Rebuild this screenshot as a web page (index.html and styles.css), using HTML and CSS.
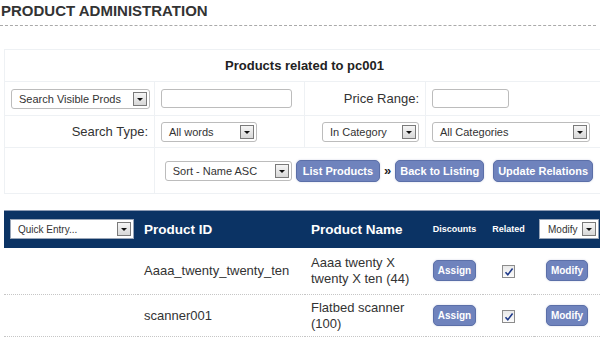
FILE: index.html
```html
<!DOCTYPE html>
<html lang="en">
<head>
    <meta charset="UTF-8">
    <title>Product Administration</title>
    <link rel="stylesheet" href="styles.css">
</head>
<body>
    <h1 class="page-title">PRODUCT ADMINISTRATION</h1>

    <table class="filter">
        <colgroup>
            <col class="f-col1"><col class="f-col2"><col class="f-col3"><col class="f-col4">
        </colgroup>
        <tr class="filter-head">
            <th colspan="4">Products related to pc001</th>
        </tr>
        <tr class="filter-row tall">
            <td><div class="select w-visible"><span>Search Visible Prods</span><i class="arrow"></i></div></td>
            <td><div class="text-input w-search"></div></td>
            <td class="label">Price Range:</td>
            <td><div class="text-input w-price"></div></td>
        </tr>
        <tr class="filter-row">
            <td class="label">Search Type:</td>
            <td><div class="select w-words"><span>All words</span><i class="arrow"></i></div></td>
            <td class="right"><div class="select w-incat"><span>In Category</span><i class="arrow"></i></div></td>
            <td><div class="select w-allcat"><span>All Categories</span><i class="arrow"></i></div></td>
        </tr>
        <tr class="filter-row actions-row">
            <td></td>
            <td colspan="3">
                <div class="actions">
                    <div class="select w-sort"><span>Sort - Name ASC</span><i class="arrow"></i></div>
                    <button class="btn wide">List Products</button>
                    <span class="raquo">&raquo;</span>
                    <button class="btn">Back to Listing</button>
                    <button class="btn">Update Relations</button>
                </div>
            </td>
        </tr>
    </table>

    <table class="products">
        <colgroup>
            <col class="p-col1"><col class="p-col2"><col class="p-col3"><col class="p-col4"><col class="p-col5"><col class="p-col6">
        </colgroup>
        <thead>
            <tr>
                <th><div class="select small w-quick"><span>Quick Entry...</span><i class="arrow"></i></div></th>
                <th class="big">Product ID</th>
                <th class="big">Product Name</th>
                <th class="tiny">Discounts</th>
                <th class="tiny">Related</th>
                <th><div class="select small w-modify"><span>Modify</span><i class="arrow"></i></div></th>
            </tr>
        </thead>
        <tbody>
            <tr class="first">
                <td></td>
                <td>Aaaa_twenty_twenty_ten</td>
                <td>Aaaa twenty X twenty X ten (44)</td>
                <td class="center"><button class="btn small">Assign</button></td>
                <td class="center"><span class="check"><svg viewBox="0 0 12 12" width="12" height="12"><path d="M2.5 6.2 L4.8 8.8 L9.6 2.6" fill="none" stroke="#1f3a8a" stroke-width="1.6"/></svg></span></td>
                <td class="center"><button class="btn small">Modify</button></td>
            </tr>
            <tr>
                <td></td>
                <td>scanner001</td>
                <td>Flatbed scanner (100)</td>
                <td class="center"><button class="btn small">Assign</button></td>
                <td class="center"><span class="check"><svg viewBox="0 0 12 12" width="12" height="12"><path d="M2.5 6.2 L4.8 8.8 L9.6 2.6" fill="none" stroke="#1f3a8a" stroke-width="1.6"/></svg></span></td>
                <td class="center"><button class="btn small">Modify</button></td>
            </tr>
        </tbody>
    </table>
</body>
</html>
```

FILE: styles.css
```css
* {
    box-sizing: border-box;
}

body {
    margin: 0;
    font-family: "Liberation Sans", Arial, sans-serif;
    color: #333;
    background: #fff;
    overflow: hidden;
}

.page-title {
    margin: 0 4px 0 0;
    padding: 2px 0 6px 1px;
    font-size: 15px;
    line-height: 17px;
    font-weight: bold;
    color: #333;
    border-bottom: 1px dashed #aaa;
}

/* filter box */
.filter {
    margin: 23px 0 0 4px;
    width: 600px;
    border-collapse: collapse;
    table-layout: fixed;
}

.f-col1 { width: 150px; }
.f-col2 { width: 150px; }
.f-col3 { width: 121px; }
.f-col4 { width: 179px; }

.filter th,
.filter td {
    border: 1px solid #eef1f4;
    padding: 0 6px;
    font-size: 13px;
    vertical-align: middle;
}

.filter-head {
    height: 32px;
}

.filter-head th {
    font-size: 13px;
    font-weight: bold;
    color: #222;
    text-align: center;
}

.filter-row {
    height: 32px;
}

.filter-row.tall {
    height: 34px;
}

.actions-row {
    height: 46px;
}

.filter td.label,
.filter td.right {
    text-align: right;
}

.select {
    display: inline-flex;
    align-items: center;
    justify-content: space-between;
    height: 20px;
    padding: 0 2px 0 7px;
    border: 1px solid #bcbcbc;
    border-radius: 3px;
    background: #fff;
    font-size: 11px;
    color: #333;
    text-align: left;
    vertical-align: middle;
    white-space: nowrap;
}

.select .arrow {
    position: relative;
    width: 14px;
    height: 14px;
    border: 1px solid #7a7a7a;
    background: linear-gradient(#f6f6f6, #d8d8d8);
}

.select .arrow::after {
    content: "";
    position: absolute;
    left: 3px;
    top: 5px;
    border-left: 3px solid transparent;
    border-right: 3px solid transparent;
    border-top: 3px solid #111;
}

.select.small {
    border-radius: 0;
    font-size: 10px;
    font-weight: normal;
    border-color: #9aa6b8;
}

.w-visible { width: 139px; }
.w-words { width: 96px; }
.w-incat { width: 97px; }
.w-allcat { width: 158px; }
.w-sort { width: 127px; margin-right: 4px; }
.w-quick { width: 124px; }
.w-modify { width: 60px; padding-left: 8px; }

.text-input {
    height: 19px;
    border: 1px solid #bcbcbc;
    border-radius: 3px;
    background: #fff;
}

.w-search { width: 131px; }
.w-price { width: 77px; }

.actions {
    display: flex;
    align-items: center;
    justify-content: flex-end;
    padding-right: 5px;
}

.actions > * {
    flex-shrink: 0;
}

.raquo {
    margin: 0 4px;
    font-weight: bold;
    font-size: 13px;
    color: #222;
}

.btn {
    height: 22px;
    padding: 0 4px;
    border: 1px solid #5b6fa8;
    border-radius: 5px;
    background: #6f83bd;
    color: #fff;
    font-family: "Liberation Sans", Arial, sans-serif;
    font-size: 11px;
    font-weight: bold;
    white-space: nowrap;
    box-shadow: 0 0 2px rgba(90, 110, 170, 0.3);
}

.btn.wide {
    padding: 0 6px;
}

.actions .btn + .btn {
    margin-left: 9px;
}

.btn.small {
    height: 21px;
    padding: 0 4px;
    font-size: 10px;
}

/* product list */
.products {
    margin: 16px 0 0 4px;
    width: 600px;
    border-collapse: collapse;
    table-layout: fixed;
}

.p-col1 { width: 134px; }
.p-col2 { width: 167px; }
.p-col3 { width: 121px; }
.p-col4 { width: 57px; }
.p-col5 { width: 51px; }
.p-col6 { width: 70px; }

.products thead tr {
    height: 37px;
    background: #0b3364;
    border-top: 1px solid #8d9bb3;
}

.products th {
    padding: 0 6px;
    color: #fff;
    text-align: left;
    vertical-align: middle;
}

.products th.big {
    font-size: 13.5px;
    font-weight: bold;
}

.products th.tiny {
    padding: 0;
    font-size: 9px;
    font-weight: bold;
    text-align: center;
}

.products th:last-child {
    padding-left: 5px;
}

.products td {
    padding: 0 6px;
    font-size: 13px;
    line-height: 16px;
    color: #333;
    vertical-align: middle;
    border-bottom: 1px dotted #c6c6c6;
}

.products tbody tr {
    height: 42px;
}

.products tbody tr.first {
    height: 47px;
}

.products td.center {
    padding: 0;
    text-align: center;
}

.products td:last-child {
    padding-right: 4px;
}

.check {
    display: inline-block;
    width: 13px;
    height: 13px;
    border: 1px solid #8c8c8c;
    background: linear-gradient(#e9e9e9, #fbfbfb);
    vertical-align: middle;
    line-height: 0;
}
```
